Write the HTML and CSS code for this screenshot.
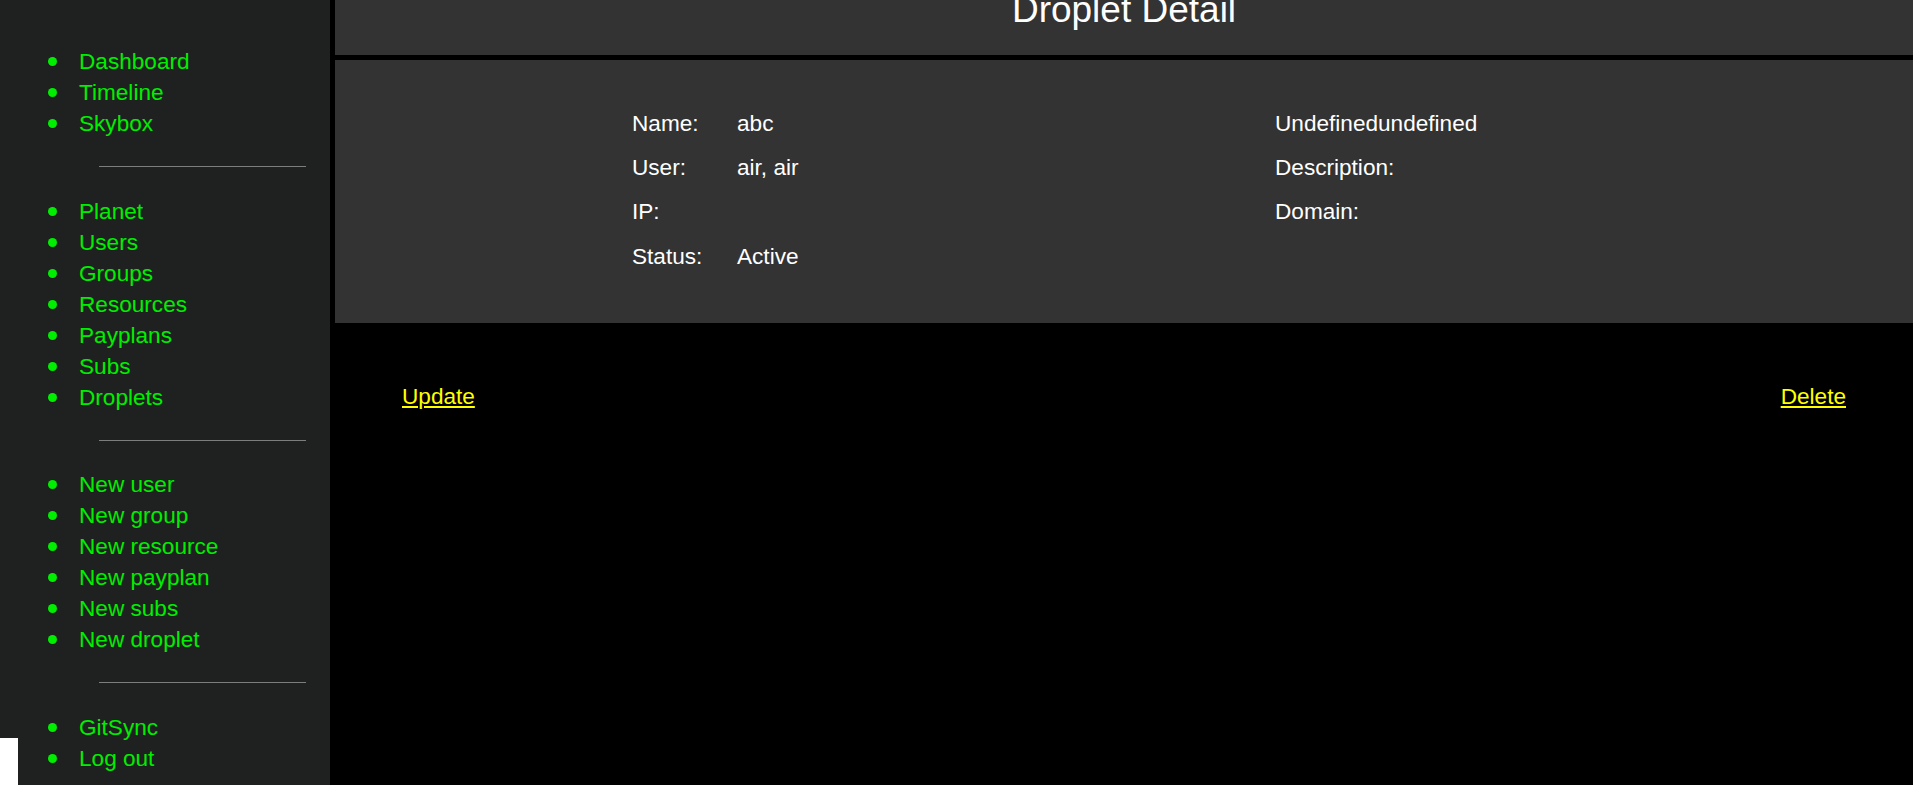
FILE: index.html
```html
<!DOCTYPE html>
<html lang="en">
<head>
<meta charset="utf-8">
<title>Droplet Detail</title>
<link rel="stylesheet" href="styles.css">
</head>
<body>
<div class="app">
  <nav class="sidebar">
    <ul class="nav-group first">
      <li><a href="#">Dashboard</a></li>
      <li><a href="#">Timeline</a></li>
      <li><a href="#">Skybox</a></li>
    </ul>
    <hr class="sep">
    <ul class="nav-group">
      <li><a href="#">Planet</a></li>
      <li><a href="#">Users</a></li>
      <li><a href="#">Groups</a></li>
      <li><a href="#">Resources</a></li>
      <li><a href="#">Payplans</a></li>
      <li><a href="#">Subs</a></li>
      <li><a href="#">Droplets</a></li>
    </ul>
    <hr class="sep">
    <ul class="nav-group">
      <li><a href="#">New user</a></li>
      <li><a href="#">New group</a></li>
      <li><a href="#">New resource</a></li>
      <li><a href="#">New payplan</a></li>
      <li><a href="#">New subs</a></li>
      <li><a href="#">New droplet</a></li>
    </ul>
    <hr class="sep">
    <ul class="nav-group">
      <li><a href="#">GitSync</a></li>
      <li><a href="#">Log out</a></li>
    </ul>
  </nav>
  <main class="main">
    <header class="page-header">
      <h1 class="page-title">Droplet Detail</h1>
    </header>
    <section class="detail">
      <div class="detail-col left">
        <div class="row"><span class="label">Name:</span><span class="value">abc</span></div>
        <div class="row"><span class="label">User:</span><span class="value">air, air</span></div>
        <div class="row"><span class="label">IP:</span><span class="value"></span></div>
        <div class="row"><span class="label">Status:</span><span class="value">Active</span></div>
      </div>
      <div class="detail-col right">
        <div class="row"><span class="label">Undefinedundefined</span></div>
        <div class="row"><span class="label">Description:</span></div>
        <div class="row"><span class="label">Domain:</span></div>
      </div>
    </section>
    <div class="actions">
      <a href="#" class="action">Update</a>
      <a href="#" class="action">Delete</a>
    </div>
  </main>
</div>
<div class="corner-box"></div>
</body>
</html>
```
FILE: styles.css
```css
html, body {
  margin: 0;
  padding: 0;
  height: 100%;
}
body {
  background: #000;
  font-family: "Liberation Sans", Arial, sans-serif;
  font-size: 22.6px;
  color: #fff;
  overflow: hidden;
}
.app {
  display: flex;
  height: 785px;
}
.sidebar {
  width: 330px;
  flex: none;
  background: #1f2020;
  display: flex;
  flex-direction: column;
  padding-top: 46px;
  box-sizing: border-box;
}
.nav-group {
  list-style: none;
  margin: 0;
  padding: 0;
}
.nav-group li {
  display: flex;
  align-items: center;
  height: 31px;
  line-height: 31px;
}
.nav-group li::before {
  content: "";
  width: 9px;
  height: 9px;
  border-radius: 50%;
  background: #00ee00;
  margin-left: 48px;
  margin-right: 22px;
  flex: none;
}
.nav-group a {
  color: #00ee00;
  text-decoration: none;
}
.sep {
  border: none;
  height: 1px;
  background: #7d7d7d;
  width: 207px;
  margin: 27px 0 28.6px 99px;
}
.main {
  flex: 1;
  margin-left: 5px;
  display: flex;
  flex-direction: column;
}
.page-header {
  height: 55px;
  background: #333;
  overflow: hidden;
  text-align: center;
}
.page-title {
  margin: -9px 0 0;
  font-size: 37px;
  font-weight: normal;
  line-height: 37px;
}
.detail {
  margin-top: 5px;
  height: 263px;
  box-sizing: border-box;
  background: #333;
  display: flex;
  padding: 41.5px 0 0 297px;
}
.detail-col.left {
  width: 643px;
}
.row {
  display: flex;
  height: 44.4px;
  line-height: 44.4px;
}
.left .label {
  width: 105px;
}
.actions {
  display: flex;
  justify-content: space-between;
  padding: 0 67px;
  margin-top: 58px;
  line-height: 31px;
}
.action {
  color: #ffff00;
  text-decoration: underline;
}
.corner-box {
  position: fixed;
  left: 0;
  bottom: 0;
  width: 18px;
  height: 47px;
  background: #fff;
}
```
